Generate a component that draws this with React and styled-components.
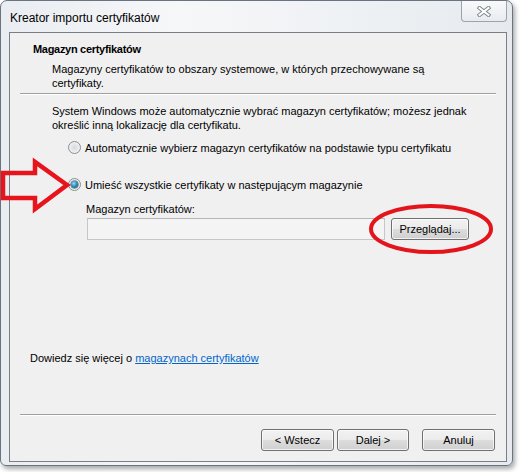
import React from 'react';
import styled, { createGlobalStyle } from 'styled-components';

const Global = createGlobalStyle`
  html, body { margin: 0; padding: 0; background: #ffffff; }
  body {
    font-family: "Liberation Sans", Arial, sans-serif;
    font-size: 11px;
    color: #000;
  }
`;

const Page = styled.div`
  position: relative;
  width: 520px;
  height: 472px;
  overflow: hidden;
  background: #ffffff;
`;

const Window = styled.div`
  width: 513px;
  height: 466px;
  box-sizing: border-box;
  border: 1px solid #6a7480;
  border-radius: 7px 7px 6px 6px;
  background: linear-gradient(90deg, #e9edf1 0%, #f6f7f9 35%, #eef1f4 70%, #e6eaee 100%);
  box-shadow: 2px 3px 5px rgba(0, 0, 0, 0.35);
  display: flex;
  flex-direction: column;
`;

const TitleBar = styled.div`
  height: 31px;
  display: flex;
  align-items: flex-start;
`;

const TitleText = styled.div`
  margin: 10px 0 0 9px;
  line-height: 15px;
  font-size: 12px;
  color: #000;
`;

const CloseButton = styled.div`
  margin-left: auto;
  margin-right: 5px;
  width: 46px;
  height: 21px;
  box-sizing: border-box;
  border: 1px solid #9aa4b0;
  border-top: none;
  border-radius: 0 0 4px 4px;
  background: linear-gradient(#f8f9fa, #e9ecef);
  display: flex;
  align-items: center;
  justify-content: center;
`;

const Client = styled.div`
  flex: 1;
  margin: 0 5px 3px 8px;
  border: 1px solid #7a7f85;
  background: #f0f0f0;
  display: flex;
  flex-direction: column;
`;

const Header = styled.div`
  padding: 9px 0 0 23px;
`;

const HeaderTitle = styled.div`
  font-weight: bold;
  line-height: 14px;
  letter-spacing: -0.3px;
`;

const Paragraph = styled.div`
  line-height: 14px;
  margin-left: ${p => p.$indent || 0}px;
  margin-top: ${p => p.$top || 0}px;
`;

const Separator = styled.div`
  height: 1px;
  margin: ${p => p.$top || 0}px 10px 0 10px;
  background: #a0a0a0;
  border-bottom: 1px solid #ffffff;
`;

const Body = styled.div`
  padding: 9px 0 0 42px;
`;

const RadioRow = styled.label`
  display: flex;
  align-items: center;
  height: 17px;
  margin-top: ${p => p.$top}px;
  margin-left: 16px;
  gap: 4px;
  line-height: 14px;
`;

const RadioCircle = styled.span`
  position: relative;
  width: 13px;
  height: 13px;
  box-sizing: border-box;
  border-radius: 50%;
  border: 1px solid #8c8e90;
  background: radial-gradient(circle at 50% 50%, #d6d8da 0%, #e8e9ea 45%, #f6f6f6 100%);
  flex: none;
  &::after {
    content: "";
    display: ${p => (p.$checked ? 'block' : 'none')};
    position: absolute;
    left: 2px;
    top: 2px;
    width: 7px;
    height: 7px;
    border-radius: 50%;
    background: radial-gradient(circle at 40% 35%, #9ee0f7 0%, #3d95c2 40%, #0d4d74 100%);
    box-shadow: 0 0 0 0.5px #1c4a66;
  }
`;

const StoreBlock = styled.div`
  margin: 9px 0 0 34px;
`;

const FieldRow = styled.div`
  display: flex;
  align-items: center;
  gap: 6px;
  margin-top: 2px;
`;

const TextField = styled.div`
  width: 298px;
  height: 22px;
  box-sizing: border-box;
  margin-left: 1px;
  border: 1px solid #c5c7ca;
  border-top-color: #b4b6b9;
  background: #f4f4f4;
`;

const Button = styled.button`
  width: ${p => p.$w}px;
  height: 22px;
  box-sizing: border-box;
  padding: 0;
  border: 1px solid #707070;
  border-radius: 3px;
  background: linear-gradient(#f2f2f2 0%, #ebebeb 50%, #dddddd 51%, #cfcfcf 100%);
  box-shadow: inset 0 0 0 1px rgba(255, 255, 255, 0.7);
  font-family: "Liberation Sans", Arial, sans-serif;
  font-size: 11px;
  color: #000;
  margin-left: ${p => p.$ml || 0}px;
`;

const Spacer = styled.div`
  flex: 1;
`;

const LinkLine = styled.div`
  padding-left: 20px;
  line-height: 14px;
  margin-bottom: 49px;
`;

const Link = styled.a`
  color: #0066cc;
  text-decoration: underline;
`;

const Footer = styled.div`
  display: flex;
  justify-content: flex-end;
  padding: 13px 11px 10px 0;
`;

const Annotation = styled.svg`
  position: absolute;
  left: ${p => p.$x}px;
  top: ${p => p.$y}px;
  overflow: visible;
  pointer-events: none;
`;

export default function App() {
  return (
    <Page>
      <Global />
      <Window>
        <TitleBar>
          <TitleText>Kreator importu certyfikatów</TitleText>
          <CloseButton>
            <svg width="14" height="11" viewBox="0 0 14 11">
              <path d="M2.5 2 L11.5 9 M11.5 2 L2.5 9" stroke="#7d858e" strokeWidth="4" strokeLinecap="square" />
              <path d="M2.5 2 L11.5 9 M11.5 2 L2.5 9" stroke="#ffffff" strokeWidth="2" strokeLinecap="square" />
            </svg>
          </CloseButton>
        </TitleBar>
        <Client>
          <Header>
            <HeaderTitle>Magazyn certyfikatów</HeaderTitle>
            <Paragraph $indent={19} $top={6}>
              Magazyny certyfikatów to obszary systemowe, w których przechowywane są
              <br />
              certyfikaty.
            </Paragraph>
          </Header>
          <Separator $top={3} />
          <Body>
            <Paragraph>
              System Windows może automatycznie wybrać magazyn certyfikatów; możesz jednak
              <br />
              określić inną lokalizację dla certyfikatu.
            </Paragraph>
            <RadioRow $top={7}>
              <RadioCircle />
              Automatycznie wybierz magazyn certyfikatów na podstawie typu certyfikatu
            </RadioRow>
            <RadioRow $top={20}>
              <RadioCircle $checked />
              Umieść wszystkie certyfikaty w następującym magazynie
            </RadioRow>
            <StoreBlock>
              <Paragraph>Magazyn certyfikatów:</Paragraph>
              <FieldRow>
                <TextField />
                <Button $w={78}>Przeglądaj...</Button>
              </FieldRow>
            </StoreBlock>
          </Body>
          <Spacer />
          <LinkLine>
            Dowiedz się więcej o <Link href="#">magazynach certyfikatów</Link>
          </LinkLine>
          <Separator />
          <Footer>
            <Button $w={73}>&lt; Wstecz</Button>
            <Button $w={72} $ml={3}>Dalej &gt;</Button>
            <Button $w={73} $ml={13}>Anuluj</Button>
          </Footer>
        </Client>
      </Window>
      <Annotation $x={0} $y={158} width="72" height="56" viewBox="0 0 72 56">
        <polygon
          points="3,15 35,15 35,4 67,27 35,51 35,40 3,40"
          fill="none"
          stroke="#e8141c"
          strokeWidth="4.5"
          strokeLinejoin="miter"
        />
      </Annotation>
      <Annotation $x={366} $y={202} width="132" height="56" viewBox="0 0 132 56">
        <ellipse cx="65" cy="27" rx="60" ry="23" fill="none" stroke="#e3141c" strokeWidth="4" />
      </Annotation>
    </Page>
  );
}
